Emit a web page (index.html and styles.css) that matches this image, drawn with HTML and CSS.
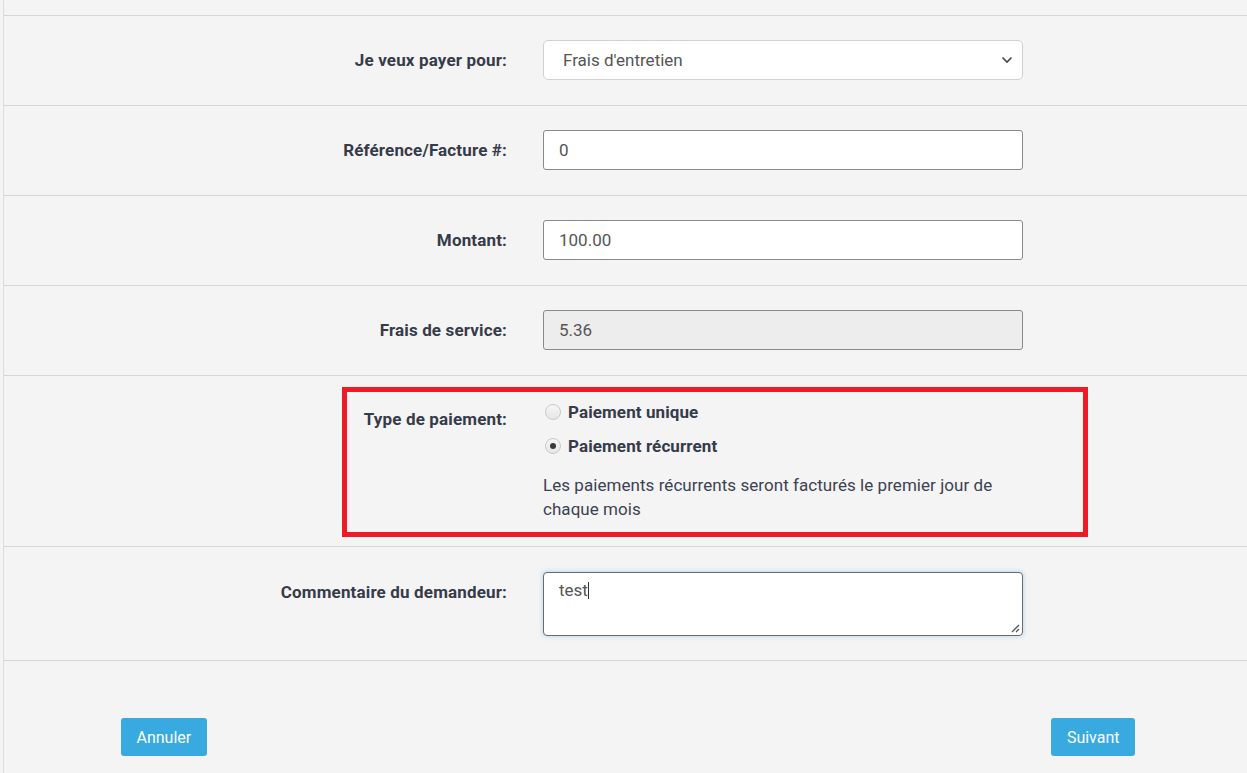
FILE: index.html
```html
<!DOCTYPE html>
<html lang="fr">
<head>
<meta charset="utf-8">
<title>Paiement</title>
<link rel="stylesheet" href="styles.css">
</head>
<body>
<div class="page">
  <div class="top-row"></div>
  <div class="row">
    <label class="label" for="pay">Je veux payer pour:</label>
    <div class="field">
      <div class="select-wrap">
        <select id="pay" class="control select">
          <option>Frais d'entretien</option>
        </select>
        <svg class="chev" width="12" height="8" viewBox="0 0 12 8"><path d="M1.5 1.5 L6 6 L10.5 1.5" fill="none" stroke="#444" stroke-width="1.6"/></svg>
      </div>
    </div>
  </div>
  <div class="row">
    <label class="label" for="ref">Référence/Facture #:</label>
    <div class="field"><input id="ref" class="control input" value="0"></div>
  </div>
  <div class="row">
    <label class="label" for="amt">Montant:</label>
    <div class="field"><input id="amt" class="control input" value="100.00"></div>
  </div>
  <div class="row">
    <label class="label" for="fee">Frais de service:</label>
    <div class="field"><input id="fee" class="control input disabled" value="5.36" readonly></div>
  </div>
  <div class="row">
    <div class="label label-radio">Type de paiement:</div>
    <div class="field">
      <div class="radio-line"><span class="radio"></span><span class="radio-text">Paiement unique</span></div>
      <div class="radio-line second"><span class="radio checked"></span><span class="radio-text">Paiement récurrent</span></div>
      <p class="help">Les paiements récurrents seront facturés le premier jour de<br>chaque mois</p>
    </div>
  </div>
  <div class="row row-comment">
    <label class="label" for="cm">Commentaire du demandeur:</label>
    <div class="field">
      <div class="textarea">test<span class="caret"></span>
        <svg class="grip" width="10" height="10" viewBox="0 0 10 10"><path d="M9 2 L2 9 M9 6 L6 9" stroke="#555" stroke-width="1.3" fill="none"/></svg>
      </div>
    </div>
  </div>
  <div class="footer">
    <button class="btn">Annuler</button>
    <button class="btn btn-next">Suivant</button>
  </div>
  <div class="highlight"></div>
</div>
</body>
</html>
```

FILE: styles.css
```css
html, body {
  margin: 0;
  padding: 0;
  background: #f4f4f4;
  font-family: Roboto, "Liberation Sans", Arial, sans-serif;
}
.page {
  position: relative;
  margin-left: 3px;
  border-left: 1px solid #dcdcdc;
  min-height: 773px;
  box-sizing: border-box;
}
.top-row {
  height: 15px;
  border-bottom: 1px solid #d6d6d6;
}
.row {
  display: grid;
  grid-template-columns: 503px 480px;
  column-gap: 36px;
  padding: 24px 0 25px;
  border-bottom: 1px solid #d6d6d6;
}
.row-comment {
  padding: 25px 0 24px;
}
.label {
  text-align: right;
  font-weight: 700;
  font-size: 17px;
  letter-spacing: 0.15px;
  color: #363b4a;
  line-height: 24px;
  padding-top: 8px;
}
.label-radio {
  padding-top: 7px;
}
.control {
  box-sizing: border-box;
  width: 480px;
  height: 40px;
  font-family: Roboto, "Liberation Sans", Arial, sans-serif;
  font-size: 17px;
  color: #555;
  background: #fff;
  border-radius: 3px;
  margin: 0;
  outline: none;
}
.select-wrap {
  position: relative;
  width: 480px;
}
.select {
  appearance: none;
  -webkit-appearance: none;
  border: 1px solid #d0d0d0;
  border-radius: 5px;
  padding: 0 0 0 19px;
}
.chev {
  position: absolute;
  right: 10px;
  top: 16px;
}
.input {
  border: 1px solid #8a8a8a;
  padding: 0 15px;
}
.disabled {
  background: #ededed;
  border-color: #8a8a8a;
}
.radio-line {
  display: flex;
  align-items: center;
  height: 24px;
}
.radio-line.second {
  margin-top: 10px;
}
.radio {
  box-sizing: border-box;
  width: 16px;
  height: 16px;
  margin-left: 2px;
  margin-right: 7px;
  border-radius: 50%;
  border: 1px solid #c9c9c9;
  background: linear-gradient(#f6f6f6, #e6e6e6);
  position: relative;
}
.radio.checked::after {
  content: "";
  position: absolute;
  left: 4px;
  top: 4px;
  width: 6px;
  height: 6px;
  border-radius: 50%;
  background: #3a3a3a;
}
.radio-text {
  font-weight: 700;
  font-size: 17px;
  letter-spacing: 0.1px;
  color: #363b4a;
}
.help {
  margin: 15px 0 0;
  font-size: 17px;
  letter-spacing: 0.05px;
  line-height: 24px;
  color: #3c4252;
}
.textarea {
  position: relative;
  box-sizing: border-box;
  width: 480px;
  height: 64px;
  background: #fff;
  border: 1px solid #6b6b6b;
  border-radius: 4px;
  box-shadow: 0 0 4px 1px rgba(102, 175, 233, 0.35);
  padding: 7px 15px;
  font-size: 17px;
  line-height: 20px;
  color: #555;
}
.caret {
  display: inline-block;
  width: 1px;
  height: 17px;
  background: #333;
  vertical-align: -3px;
}
.grip {
  position: absolute;
  right: 2px;
  bottom: 2px;
}
.footer {
  display: flex;
  justify-content: space-between;
  padding: 57px 112px 0 117px;
}
.btn {
  height: 38px;
  padding: 0 15.5px;
  border: none;
  border-radius: 3px;
  background: #38aae0;
  color: #fff;
  font-family: Roboto, "Liberation Sans", Arial, sans-serif;
  font-size: 16px;
}
.highlight {
  position: absolute;
  left: 338px;
  top: 387px;
  width: 746px;
  height: 150px;
  box-sizing: border-box;
  border: 5px solid #ed1c24;
  pointer-events: none;
}
```
